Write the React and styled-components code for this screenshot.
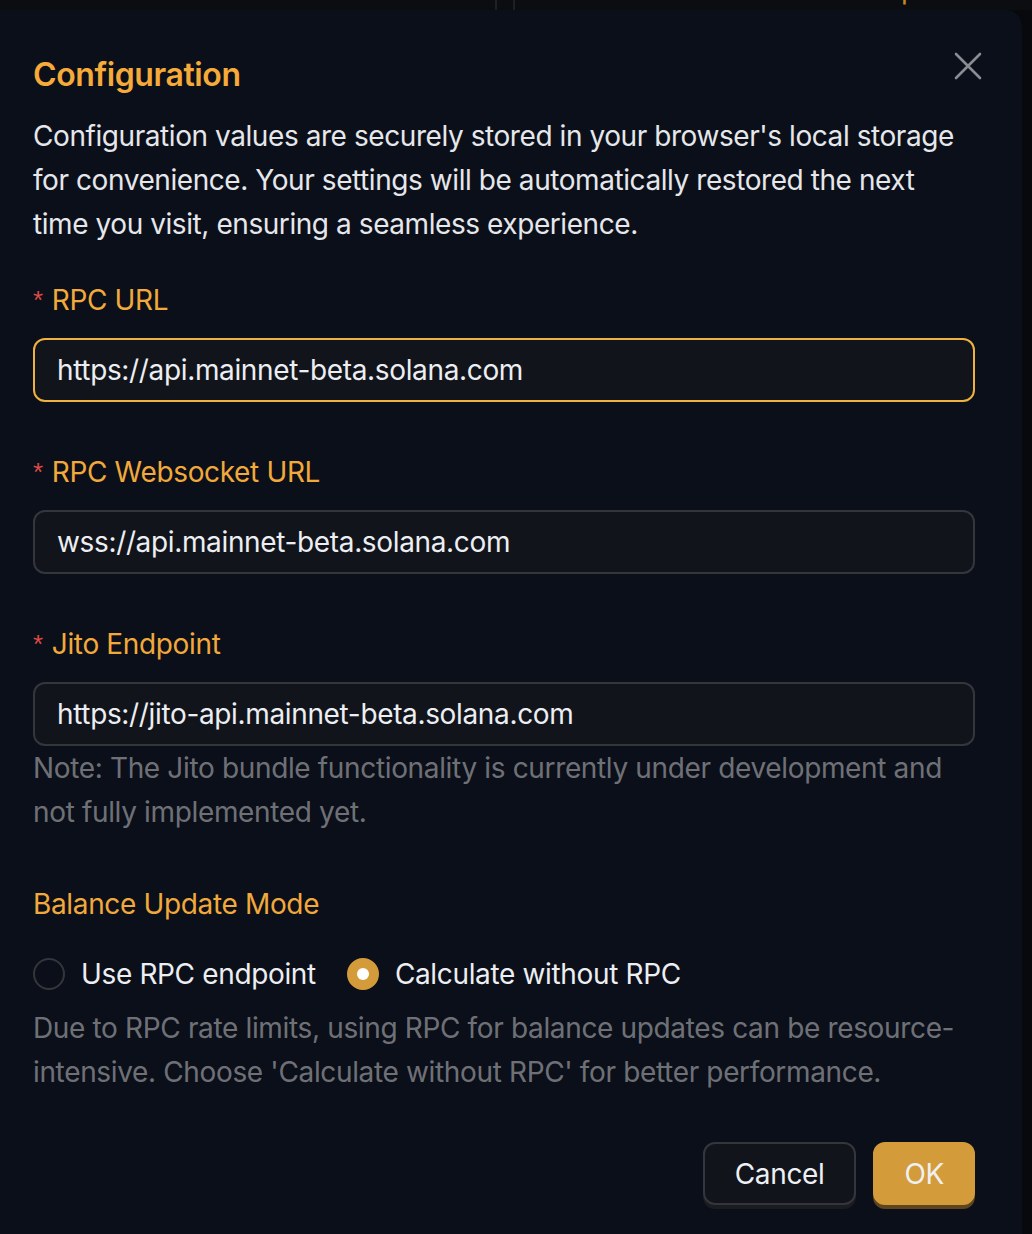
import React, { useState } from "react";
import styled, { createGlobalStyle } from "styled-components";

const GlobalStyle = createGlobalStyle`
    html, body {
        margin: 0;
        padding: 0;
        background: #08090c;
        font-family: Inter, "Noto Sans", "Liberation Sans", sans-serif;
        -webkit-font-smoothing: antialiased;
    }
    * {
        box-sizing: border-box;
    }
`;

const fields = [
    { key: "rpc", label: "RPC URL", value: "https://api.mainnet-beta.solana.com", focused: true },
    { key: "ws", label: "RPC Websocket URL", value: "wss://api.mainnet-beta.solana.com" },
    {
        key: "jito",
        label: "Jito Endpoint",
        value: "https://jito-api.mainnet-beta.solana.com",
        note: [
            "Note: The Jito bundle functionality is currently under development and",
            "not fully implemented yet.",
        ],
    },
];

const modes = [
    { key: "rpc", label: "Use RPC endpoint" },
    { key: "calc", label: "Calculate without RPC" },
];

const Lines = ({ lines }) =>
    lines.map((line, i) => (
        <React.Fragment key={i}>
            {i > 0 && <br />}
            {line}
        </React.Fragment>
    ));

const CloseIcon = () => (
    <svg width="28" height="28" viewBox="0 0 28 28" fill="none">
        <path d="M2 2L26 26M26 2L2 26" stroke="#8b8c91" strokeWidth="2.6" strokeLinecap="round" />
    </svg>
);

const App = () => {
    const [mode, setMode] = useState("calc");

    return (
        <>
            <GlobalStyle />
            <Page>
                <TopBar>
                    <TopCell $width={495} />
                    <TopDivider />
                    <TopCell $width={16} />
                    <TopDivider />
                    <TopText>
                        <span>Wallets</span>
                        <span>Group</span>
                    </TopText>
                </TopBar>
                <Modal>
                    <Header>
                        <Title>Configuration</Title>
                        <CloseButton aria-label="Close">
                            <CloseIcon />
                        </CloseButton>
                    </Header>
                    <Intro>
                        <Lines
                            lines={[
                                "Configuration values are securely stored in your browser's local storage",
                                "for convenience. Your settings will be automatically restored the next",
                                "time you visit, ensuring a seamless experience.",
                            ]}
                        />
                    </Intro>

                    {fields.map((f) => (
                        <FormItem key={f.key}>
                            <Label>
                                <Required>*</Required>
                                {f.label}
                            </Label>
                            <Input $focused={f.focused} defaultValue={f.value} readOnly />
                            {f.note && (
                                <Help>
                                    <Lines lines={f.note} />
                                </Help>
                            )}
                        </FormItem>
                    ))}

                    <FormItem>
                        <Label>Balance Update Mode</Label>
                        <RadioGroup>
                            {modes.map((m) => (
                                <RadioOption key={m.key} onClick={() => setMode(m.key)}>
                                    <RadioCircle $checked={mode === m.key} />
                                    <span>{m.label}</span>
                                </RadioOption>
                            ))}
                        </RadioGroup>
                        <Help>
                            <Lines
                                lines={[
                                    "Due to RPC rate limits, using RPC for balance updates can be resource-",
                                    "intensive. Choose 'Calculate without RPC' for better performance.",
                                ]}
                            />
                        </Help>
                    </FormItem>

                    <Footer>
                        <Button>Cancel</Button>
                        <Button $primary>OK</Button>
                    </Footer>
                </Modal>
            </Page>
        </>
    );
};

export default App;

const Page = styled.div`
    width: 1032px;
    height: 1234px;
    overflow: hidden;
    background: #08090c;
    letter-spacing: -0.35px;
`;

const TopBar = styled.div`
    height: 10px;
    display: flex;
    background: #0c0d10;
    overflow: hidden;
`;

const TopCell = styled.div`
    width: ${(p) => p.$width}px;
`;

const TopDivider = styled.div`
    width: 2px;
    background: #1e2024;
`;

const TopText = styled.div`
    display: flex;
    gap: 200px;
    padding-left: 30px;
    margin-top: -30px;
    font-size: 28px;
    line-height: 38px;
    color: #c8862a;
`;

const Modal = styled.div`
    width: 1022px;
    min-height: 1300px;
    background: #0b0f19;
    border-top-right-radius: 16px;
    padding: 41px 40px 0 33px;
    color: #e6e7eb;
`;

const Header = styled.div`
    display: flex;
    justify-content: space-between;
    align-items: flex-start;
`;

const Title = styled.h2`
    margin: 0;
    font-size: 32px;
    font-weight: 600;
    line-height: 48px;
    letter-spacing: -0.4px;
    color: #f5aa3a;
`;

const CloseButton = styled.button`
    border: none;
    background: transparent;
    padding: 0;
    margin: 1px 0 0 0;
    cursor: pointer;
    display: flex;
    width: 28px;
    height: 28px;
`;

const Intro = styled.p`
    margin: 15px 0 32px;
    font-size: 28px;
    line-height: 44px;
    letter-spacing: -0.43px;
    color: #e6e7eb;
    white-space: nowrap;
`;

const FormItem = styled.div`
    margin-bottom: 48px;
`;

const Label = styled.div`
    display: flex;
    align-items: center;
    font-size: 28px;
    line-height: 44px;
    color: #f2a93b;
    padding-bottom: 16px;
`;

const Required = styled.span`
    color: #dc4a46;
    font-size: 26px;
    margin-right: 9px;
    font-family: "Liberation Sans", sans-serif;
`;

const Input = styled.input`
    display: block;
    width: 942px;
    height: 64px;
    padding: 0 22px;
    border-radius: 12px;
    border: 2px solid ${(p) => (p.$focused ? "#efb240" : "#34363b")};
    background: #11141b;
    color: #eceef2;
    font-family: inherit;
    font-size: 28px;
    letter-spacing: inherit;
    outline: none;
`;

const Help = styled.div`
    font-size: 28px;
    line-height: 44px;
    color: rgba(255, 255, 255, 0.42);
    white-space: nowrap;
`;

const RadioGroup = styled.div`
    display: flex;
    align-items: center;
    height: 64px;
    gap: 31px;
`;

const RadioOption = styled.label`
    display: flex;
    align-items: center;
    gap: 16px;
    font-size: 28px;
    color: #eceef2;
    cursor: pointer;
`;

const RadioCircle = styled.span`
    width: 32px;
    height: 32px;
    border-radius: 50%;
    position: relative;
    border: 2px solid ${(p) => (p.$checked ? "#d49b3a" : "#34363b")};
    background: ${(p) => (p.$checked ? "#d49b3a" : "transparent")};

    &::after {
        content: "";
        position: absolute;
        left: 50%;
        top: 50%;
        width: 12px;
        height: 12px;
        margin: -6px 0 0 -6px;
        border-radius: 50%;
        background: #ffffff;
        display: ${(p) => (p.$checked ? "block" : "none")};
    }
`;

const Footer = styled.div`
    display: flex;
    justify-content: flex-end;
    gap: 17px;
    margin: 5px 7px 0 0;
`;

const Button = styled.button`
    height: 63px;
    padding: 0 ${(p) => (p.$primary ? "29px" : "30px")};
    border-radius: 12px;
    font-family: inherit;
    font-size: 28px;
    letter-spacing: inherit;
    cursor: pointer;
    border: 2px solid ${(p) => (p.$primary ? "#d49b3a" : "#34363b")};
    background: ${(p) => (p.$primary ? "#d49b3a" : "#11141b")};
    color: #eef0f4;
    box-shadow: 0 4px 0 ${(p) => (p.$primary ? "#5e4520" : "#1a1c22")};
`;
